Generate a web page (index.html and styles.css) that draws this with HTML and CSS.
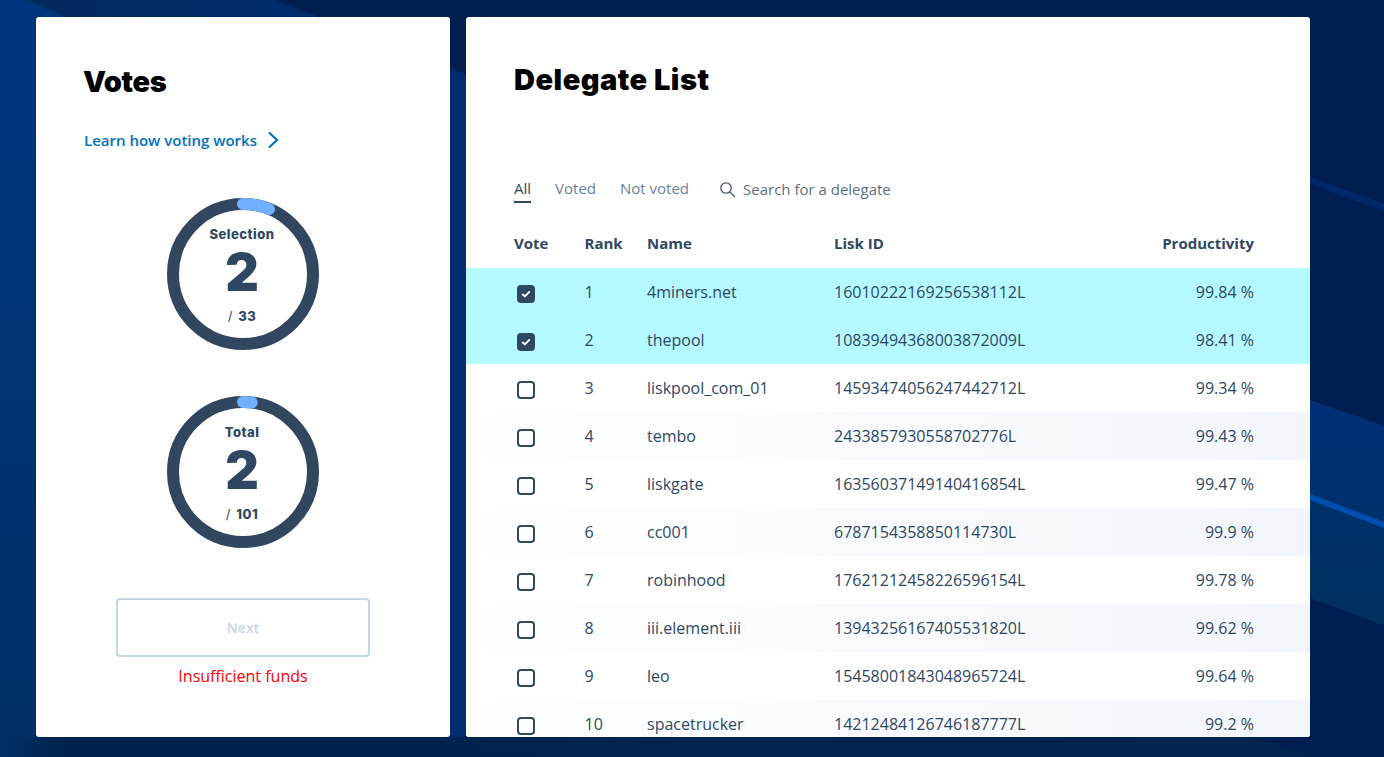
FILE: index.html
```html
<!DOCTYPE html>
<html lang="en">
<head>
  <meta charset="UTF-8">
  <meta name="viewport" content="width=device-width, initial-scale=1.0">
  <link rel="stylesheet" href="styles.css">
  <title>Delegate List</title>
</head>
<body>

<!-- background streaks -->
<svg class="backdrop" viewBox="0 0 1384 757" preserveAspectRatio="none">
  <defs>
    <linearGradient id="bg-left" x1="0" y1="0" x2="0" y2="1">
      <stop offset="0" stop-color="#00367f"/>
      <stop offset="1" stop-color="#002f66"/>
    </linearGradient>
    <linearGradient id="bg-top" x1="0" y1="0" x2="1" y2="0">
      <stop offset="0" stop-color="#002a5c"/>
      <stop offset="1" stop-color="#002c74"/>
    </linearGradient>
    <linearGradient id="bg-band" x1="0" y1="0" x2="0" y2="1">
      <stop offset="0" stop-color="#002f78"/>
      <stop offset="1" stop-color="#00315f"/>
    </linearGradient>
    <linearGradient id="bg-bottom" x1="0" y1="0" x2="1" y2="0">
      <stop offset="0" stop-color="#003068"/>
      <stop offset="0.05" stop-color="#00234d"/>
      <stop offset="1" stop-color="#00254f"/>
    </linearGradient>
  </defs>
  <rect width="1384" height="757" fill="#001f50"/>
  <polygon points="0,0 25,0 450,170 450,757 0,757" fill="url(#bg-left)"/>
  <polygon points="25,0 275,0 466,75 466,757 450,757 450,170" fill="url(#bg-top)"/>
  <polygon points="1310,400 1384,426 1384,625 1310,598" fill="url(#bg-band)"/>
  <polygon points="1310,494 1384,522 1384,528 1310,500" fill="#004fb0"/>
  <polygon points="1310,177 1384,204 1384,211 1310,184" fill="#00286a"/>
  <polygon points="0,737 1256,737 1310,757 0,757" fill="url(#bg-bottom)"/>
</svg>

<div class="page">
  <section class="panel votes">
    <h1 class="title">Votes</h1>
    <a class="learn-link">Learn how voting works
      <svg width="12" height="18" viewBox="0 0 12 18"><path d="M2 1.5 L10 9 L2 16.5" fill="none" stroke="#0072bd" stroke-width="2.2"/></svg>
    </a>

    <div class="gauge gauge-selection">
      <svg width="152" height="152" viewBox="0 0 152 152">
        <circle cx="76" cy="76" r="70" fill="none" stroke="#30475f" stroke-width="12"/>
        <path d="M76 6 A70 70 0 0 1 102 11" fill="none" stroke="#70b0ff" stroke-width="12" stroke-linecap="round"/>
      </svg>
      <div class="gauge-label">Selection</div>
      <div class="gauge-value">2</div>
      <div class="gauge-max"><span class="slash">/</span> 33</div>
    </div>

    <div class="gauge gauge-total">
      <svg width="152" height="152" viewBox="0 0 152 152">
        <circle cx="76" cy="76" r="70" fill="none" stroke="#30475f" stroke-width="12"/>
        <path d="M76 6 A70 70 0 0 1 84.7 6.5" fill="none" stroke="#70b0ff" stroke-width="12" stroke-linecap="round"/>
      </svg>
      <div class="gauge-label">Total</div>
      <div class="gauge-value">2</div>
      <div class="gauge-max"><span class="slash">/</span> 101</div>
    </div>

    <button class="next-button">Next</button>
    <div class="funds-error">Insufficient funds</div>
  </section>

  <section class="panel delegates">
    <h1 class="title">Delegate List</h1>

    <div class="filters">
      <span class="tab active">All</span>
      <span class="tab">Voted</span>
      <span class="tab">Not voted</span>
      <span class="search">
        <svg width="17" height="17" viewBox="0 0 17 17"><circle cx="7" cy="7" r="5.2" fill="none" stroke="#44586f" stroke-width="1.3"/><path d="M11 11 L16 16" stroke="#44586f" stroke-width="1.3"/></svg>
        Search for a delegate
      </span>
    </div>

    <div class="row head">
      <span>Vote</span><span>Rank</span><span>Name</span><span>Lisk ID</span><span class="right">Productivity</span>
    </div>
    <div id="rows"></div>
  </section>
</div>

<script>
  const delegates = [
    [1, '4miners.net', '16010222169256538112L', '99.84 %', true],
    [2, 'thepool', '10839494368003872009L', '98.41 %', true],
    [3, 'liskpool_com_01', '14593474056247442712L', '99.34 %', false],
    [4, 'tembo', '2433857930558702776L', '99.43 %', false],
    [5, 'liskgate', '16356037149140416854L', '99.47 %', false],
    [6, 'cc001', '6787154358850114730L', '99.9 %', false],
    [7, 'robinhood', '17621212458226596154L', '99.78 %', false],
    [8, 'iii.element.iii', '13943256167405531820L', '99.62 %', false],
    [9, 'leo', '15458001843048965724L', '99.64 %', false],
    [10, 'spacetrucker', '14212484126746187777L', '99.2 %', false],
  ];

  const rows = document.getElementById('rows');
  const tick = '<svg width="10" height="8" viewBox="0 0 10 8"><path d="M1.2 4 L3.8 6.4 L8.8 1.4" fill="none" stroke="#fff" stroke-width="1.9"/></svg>';

  delegates.forEach(d => {
    const row = document.createElement('div');
    row.className = 'row' + (d[4] ? ' voted' : '');
    row.innerHTML = `<span><i class="check">${d[4] ? tick : ''}</i></span><span>${d[0]}</span><span>${d[1]}</span><span>${d[2]}</span><span class="right">${d[3]}</span>`;
    rows.appendChild(row);
  });
</script>

</body>
</html>
```

FILE: styles.css
```css
html, body {
  height: 100%;
  margin: 0;
}

body {
  background-color: #001f50;
  color: #2f4763;
  font-family: 'Open Sans', sans-serif;
  overflow: hidden;
}

.backdrop {
  position: absolute;
  top: 0;
  left: 0;
  width: 100%;
  height: 100%;
}

.page {
  position: relative;
  display: flex;
  gap: 16px;
  padding: 17px 0 0 36px;
}

.panel {
  height: 720px;
  background-color: #fff;
  border-radius: 3px;
  overflow: hidden;
  box-sizing: border-box;
}

.title {
  margin: 0;
  color: #000;
  font-family: 'Inter', sans-serif;
  font-size: 29px;
  font-weight: 900;
  line-height: 36px;
  letter-spacing: -0.3px;
}

/* Votes panel */
.votes {
  width: 414px;
  padding: 47px 48px 0;
  display: flex;
  flex-direction: column;
}

.votes .title {
  margin-left: -1px;
}

.learn-link {
  display: flex;
  align-items: center;
  gap: 10px;
  margin-top: 30px;
  color: #0072bd;
  font-size: 15px;
  font-weight: 600;
  line-height: 20px;
}

.gauge {
  position: relative;
  align-self: center;
  width: 152px;
  height: 152px;
  margin-top: 48px;
  text-align: center;
}

.gauge svg {
  position: absolute;
  top: 0;
  left: 0;
}

.gauge-total {
  margin-top: 46px;
}

.gauge-label, .gauge-value, .gauge-max {
  position: relative;
  font-family: 'Inter', sans-serif;
  font-weight: 800;
  margin-left: -2px;
}

.gauge-label {
  padding-top: 28px;
  font-size: 13px;
  line-height: 16px;
  letter-spacing: 0.5px;
}

.gauge-value {
  margin-top: 3px;
  font-size: 52px;
  font-weight: 900;
  line-height: 56px;
}

.gauge-max {
  margin-top: 7px;
  font-size: 13px;
  line-height: 16px;
  letter-spacing: 0.5px;
}

.slash {
  font-weight: 400;
  margin-right: 2px;
}

.next-button {
  align-self: center;
  width: 254px;
  height: 59px;
  margin-top: 50px;
  background-color: #fff;
  border: 2px solid #c5d7e6;
  border-radius: 4px;
  color: #c5d7e6;
  font-family: 'Open Sans', sans-serif;
  font-size: 14px;
  font-weight: 600;
}

.funds-error {
  margin-top: 9px;
  color: #f00;
  font-size: 16px;
  line-height: 20px;
  text-align: center;
}

/* Delegate list panel */
.delegates {
  width: 844px;
}

.delegates .title {
  padding: 45px 0 0 48px;
  letter-spacing: 0.5px;
}

.filters {
  display: flex;
  align-items: flex-start;
  gap: 24px;
  margin-top: 78px;
  padding-left: 48px;
  font-size: 15px;
  line-height: 24px;
  color: #6a7f9c;
}

.tab.active {
  color: #2f4763;
  padding-bottom: 1px;
  border-bottom: 2px solid #2f4763;
}

.search {
  display: flex;
  align-items: center;
  gap: 7px;
  margin-left: 6px;
  padding-top: 1px;
  font-size: 15px;
  color: #5f6f83;
}

.row {
  display: grid;
  grid-template-columns: 70.5px 62.5px 187px 1fr auto;
  align-items: center;
  height: 48px;
  padding: 0 56px 0 48px;
  font-size: 16px;
}

.row.head {
  box-sizing: border-box;
  margin-top: 17px;
  padding-bottom: 2px;
  font-size: 15px;
  font-weight: 700;
}

.right {
  text-align: right;
}

#rows .row:nth-child(even) {
  background: linear-gradient(to right, #fff, #f2f5fb);
}

#rows .row.voted, #rows .row.voted:nth-child(even) {
  background: #b4f9ff;
}

.check {
  display: flex;
  align-items: center;
  justify-content: center;
  width: 18px;
  height: 18px;
  margin: 4px 0 0 3px;
  box-sizing: border-box;
  border: 2px solid #2f4763;
  border-radius: 4px;
}

.voted .check {
  background-color: #2f4763;
}
```
